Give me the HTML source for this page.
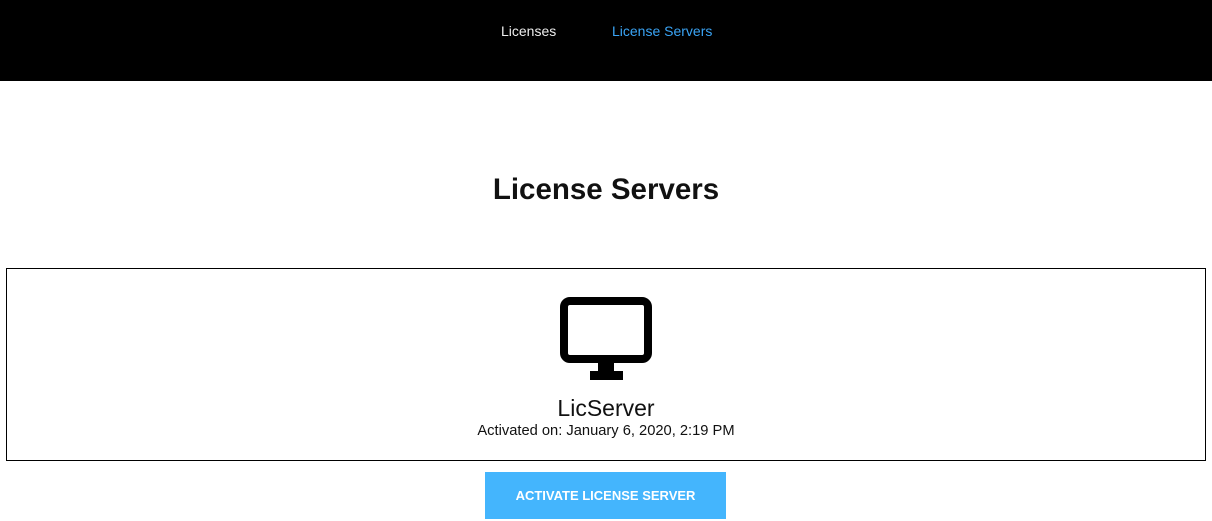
<!DOCTYPE html>
<html><head><style>
body{margin:0;width:1212px;height:521px;overflow:hidden;background:#fff;font-family:"Liberation Sans",sans-serif;position:relative}
.nav{position:absolute;left:0;top:0;width:1212px;height:81px;background:#000}
.nav span{position:absolute;top:23px;font-size:14px}
h1{position:absolute;top:173px;left:0;width:1212px;text-align:center;margin:0;font-size:29.5px;font-weight:bold;color:#111}
.box{position:absolute;left:6px;top:268px;width:1198px;height:191px;border:1px solid #000}
.t{position:absolute;left:0;width:1212px;text-align:center;color:#111}
.btn{position:absolute;left:485px;top:472px;width:241px;height:47px;background:#44b5fd;color:#fff;font-weight:bold;font-size:13px;text-align:center;line-height:47px}
</style></head><body>
<div class="nav"><span style="left:501px;color:#eee">Licenses</span><span style="left:612px;color:#3aa4f5">License Servers</span></div>
<h1>License Servers</h1>
<div class="box"></div>
<svg style="position:absolute;left:560px;top:297px" width="93" height="84">
<rect x="4" y="4" width="84" height="58" rx="6" fill="none" stroke="#000" stroke-width="8"/>
<rect x="38" y="64" width="16" height="10" fill="#000"/>
<rect x="30" y="74" width="33" height="9" fill="#000"/>
</svg>
<div class="t" style="top:395px;font-size:23px">LicServer</div>
<div class="t" style="top:423px;font-size:14.7px">Activated on: January 6, 2020, 2:19 PM</div>
<div class="btn">ACTIVATE LICENSE SERVER</div>
</body></html>
